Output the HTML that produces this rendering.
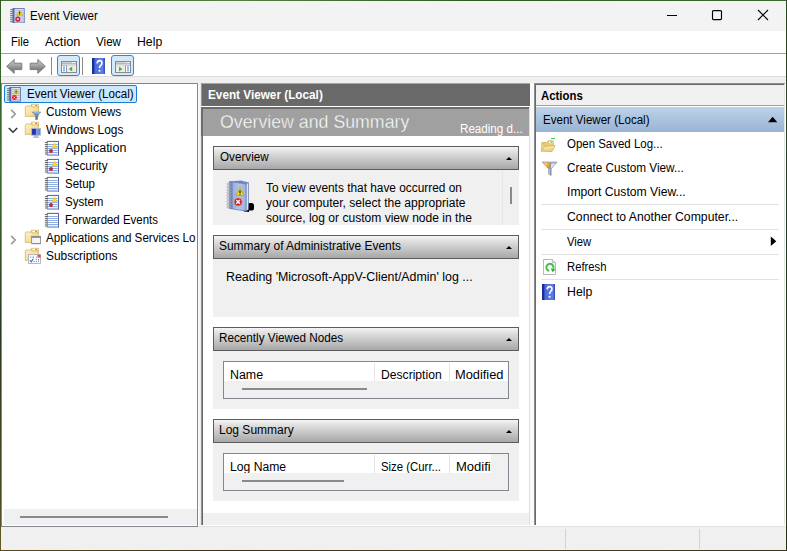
<!DOCTYPE html>
<html><head><meta charset="utf-8"><title>Event Viewer</title>
<style>
html,body{margin:0;padding:0}
body{width:787px;height:551px;overflow:hidden;position:relative;background:#2e4a22;font-family:"Liberation Sans",sans-serif;font-size:12px;color:#000}
.a{position:absolute}
.t{position:absolute;white-space:nowrap;line-height:14px;transform-origin:0 0}
#edgeT{left:0;top:0;width:787px;height:1px;background:linear-gradient(90deg,#3f6a2c,#55803a 30%,#2f5a24 60%,#3a6a2a)}
#edgeL{left:0;top:0;width:1px;height:551px;background:linear-gradient(180deg,#2f5a22,#3e7030 30%,#2a3a20 60%,#4a4a20 90%,#6a5a20)}
#edgeR{left:786px;top:0;width:1px;height:551px;background:linear-gradient(180deg,#2a4a20,#1f3a1a 50%,#2a3018)}
#edgeB{left:0;top:549px;width:787px;height:2px;background:linear-gradient(90deg,#5a4a1c,#3a3018 30%,#4a4020 60%,#3a3420)}
#win{left:1px;top:1px;width:785px;height:548px;background:#f0f0f0}
#title{left:1px;top:1px;width:785px;height:30px;background:#f3f3f3}
#menu{left:1px;top:31px;width:785px;height:22px;background:#fff}
#mline{left:1px;top:53px;width:785px;height:1px;background:#a0a0a0}
#tool{left:1px;top:54px;width:785px;height:22px;background:#fff}
#tline{left:1px;top:76px;width:785px;height:1px;background:#dcdcdc}
.tb{border:1px solid #2a8ade;background:#d4eafb;border-radius:3px;box-sizing:border-box}
.sep{width:1px;background:#8a8a8a}
/* tree pane */
#tree{left:1px;top:83px;width:197px;height:444px;box-sizing:border-box;border:1px solid #828790;background:#fff}
#treesb{left:3px;top:509px;width:193px;height:16px;background:#f0f0f0;border-left:1px solid #fff}
.thumb{height:2px;background:#8a8a8a}
#sel{left:4px;top:85px;width:133px;height:18px;box-sizing:border-box;border:1px solid #1a7fd4;background:#cce8ff;border-radius:2px}
/* middle pane */
#midgap{left:198px;top:83px;width:3px;height:444px;background:linear-gradient(90deg,#fbfbfb 0,#fbfbfb 33%,#f5f5f5 33%,#f5f5f5 66%,#ebebeb 66%)}
#mid{left:201px;top:83px;width:329px;height:443px;background:#fff}
#midbl{left:201px;top:83px;width:1px;height:443px;background:#969696}
#midbl2{left:202px;top:107px;width:1px;height:419px;background:#666}
#midbt{left:201px;top:83px;width:329px;height:1px;background:#a4a4a4}
#mhead{left:202px;top:84px;width:328px;height:21.5px;background:#696969}
#banner{left:201px;top:107px;width:328px;height:28.5px;background:#a0a0a0;box-sizing:border-box;border-top:2px solid #6c6c6c;border-left:2px solid #6c6c6c}
#midsb{left:203px;top:513px;width:326px;height:13px;background:#f0f0f0}
.sh{left:213px;width:306px;height:24px;box-sizing:border-box;border:1px solid #5c5c5c;background:linear-gradient(180deg,#f4f4f4 0%,#dedede 25%,#c6c6c6 58%,#a7a7a7 100%)}
.sc{left:213px;width:306px;background:#f0f0f0}
.tri{width:0;height:0;border-left:3px solid transparent;border-right:3px solid transparent;border-bottom:3.5px solid #000}
.lb{left:223px;width:286px;height:38px;box-sizing:border-box;border:1px solid #828790;background:#f0f0f0}
.lbw{left:224px;width:284px;height:19px;background:#fff;overflow:hidden}
.cs{width:1px;height:18px;background:#e5e5e5}
/* actions pane */
#gap2{left:530px;top:83px;width:4px;height:443px;background:#fafafa}
#act{left:534px;top:83px;width:252px;height:443px;background:#fff}
#actbl{left:534px;top:83px;width:1px;height:443px;background:#8e8e8e}
#actbl2{left:535px;top:84px;width:1px;height:442px;background:#696969}
#actbt{left:534px;top:83px;width:251px;height:1px;background:#8e8e8e}
#actbt2{left:535px;top:84px;width:250px;height:1px;background:#696969}
#actbr{left:784px;top:84px;width:1px;height:442px;background:#e3e3e3}
#actbr2{left:785px;top:83px;width:1px;height:443px;background:#fff}
#ahead{left:536px;top:85px;width:248px;height:20px;background:#f0f0f0}
#aline{left:536px;top:105px;width:248px;height:1px;background:#a0a0a0}
#aline2{left:536px;top:106px;width:248px;height:1px;background:#fff}
#ablue{left:536px;top:107px;width:248px;height:25px;background:linear-gradient(180deg,#bed2e9 0%,#afc6e1 40%,#98b3d4 100%)}
.asep{left:541px;width:238px;height:1px;background:#e2e2e2}
/* status */
#paneb{left:198px;top:525px;width:588px;height:1px;background:#fff}
#paneb2{left:198px;top:526px;width:588px;height:1px;background:#e2e2e2}
#status{left:1px;top:527px;width:785px;height:22.5px;background:#f0f0f0}
.sd{top:529px;width:1px;height:20px;background:#d2d2d2}
</style></head><body>
<div class="a" id="win"></div>
<div class="a" id="edgeT"></div><div class="a" id="edgeL"></div><div class="a" id="edgeR"></div><div class="a" id="edgeB"></div>
<div class="a" id="title"></div>
<div class="a" id="menu"></div><div class="a" id="mline"></div>
<div class="a" id="tool"></div><div class="a" id="tline"></div>
<!--ICONS_TOP-->
<!-- caption buttons -->
<svg class="a" style="left:660px;top:1px" width="126" height="30" viewBox="0 0 126 30">
<path d="M7 14.5h10" stroke="#000" stroke-width="1" fill="none"/>
<rect x="52.5" y="9.6" width="9" height="9" rx="1" stroke="#000" stroke-width="1.15" fill="none"/>
<path d="M98 9l10 10M108 9l-10 10" stroke="#000" stroke-width="1.1" fill="none"/>
</svg>
<!-- toolbar -->
<div class="a tb" style="left:57px;top:55px;width:23px;height:21px"></div>
<div class="a tb" style="left:111px;top:55px;width:23px;height:21px"></div>
<div class="a sep" style="left:51px;top:57px;height:18px"></div>
<div class="a sep" style="left:82px;top:57px;height:18px"></div>
<!-- tree -->
<div class="a" id="tree"></div>
<div class="a" id="treesb"></div><div class="a thumb" style="left:20px;top:516px;width:148px"></div>
<div class="a" id="sel"></div>
<!-- middle -->
<div class="a" id="midgap"></div>
<div class="a" id="mid"></div><div class="a" id="midbt"></div><div class="a" id="midbl"></div><div class="a" id="midbl2"></div>
<div class="a" id="mhead"></div><div class="a" style="left:201px;top:105.5px;width:329px;height:1.5px;background:#fff"></div>
<div class="a" id="banner"></div>
<div class="a" id="midsb"></div><div class="a" style="left:529px;top:107px;width:1px;height:419px;background:#dedede"></div>
<div class="a sh" style="top:146px"></div><div class="a sc" style="top:170px;height:55px"></div>
<div class="a sh" style="top:235px"></div><div class="a sc" style="top:259px;height:58px"></div>
<div class="a sh" style="top:327px"></div><div class="a sc" style="top:351px;height:58px"></div>
<div class="a sh" style="top:419px"></div><div class="a sc" style="top:443px;height:58px"></div>
<div class="a tri" style="left:506px;top:157px"></div>
<div class="a tri" style="left:506px;top:246px"></div>
<div class="a tri" style="left:506px;top:338px"></div>
<div class="a tri" style="left:506px;top:430px"></div>
<div class="a" style="left:502px;top:170px;width:1px;height:55px;background:#e6e6e6"></div>
<div class="a" style="left:510px;top:187px;width:2px;height:17px;background:#8a8a8a"></div>
<div class="a lb" style="top:361px"></div><div class="a lbw" style="top:362px"></div>
<div class="a cs" style="left:374px;top:363px"></div><div class="a cs" style="left:449px;top:363px"></div>
<div class="a thumb" style="left:242px;top:388px;width:125px"></div>
<div class="a lb" style="top:453px"></div><div class="a lbw" style="top:454px;width:267px"></div>
<div class="a cs" style="left:374px;top:455px"></div><div class="a cs" style="left:449px;top:455px"></div>
<div class="a thumb" style="left:242px;top:480px;width:102px"></div>
<!-- actions -->
<div class="a" id="gap2"></div>
<div class="a" id="act"></div>
<div class="a" id="actbl"></div><div class="a" id="actbt"></div><div class="a" id="actbl2"></div><div class="a" id="actbt2"></div><div class="a" id="actbr"></div><div class="a" id="actbr2"></div>
<div class="a" id="ahead"></div><div class="a" id="aline"></div><div class="a" id="aline2"></div>
<div class="a" id="ablue"></div>
<svg class="a" style="left:766px;top:114px" width="14" height="12" viewBox="0 0 14 12"><path d="M2 8.3h9.3l-4.65-5.5z" fill="#000"/></svg>
<div class="a asep" style="top:204px"></div>
<div class="a asep" style="top:229px"></div>
<div class="a asep" style="top:254px"></div>
<div class="a asep" style="top:279px"></div>
<svg class="a" style="left:768px;top:234px" width="12" height="14" viewBox="0 0 12 14"><path d="M2.8 2.6v9.5l5.5-4.75z" fill="#000"/></svg>
<!-- status -->
<div class="a" id="paneb"></div><div class="a" id="paneb2"></div>
<div class="a" id="status"></div>
<div class="a sd" style="left:565px"></div><div class="a sd" style="left:699px"></div>
<svg class="a" style="left:8.8px;top:6.5px" width="16.8" height="16.8" viewBox="0 0 16 16"><rect x="3.9" y="1.5" width="10.6" height="13.7" fill="#dfe6f6" stroke="#6474ae" stroke-width="0.9"/><rect x="3.6" y="1.1" width="1.7" height="14.5" fill="#5c6cab"/><path d="M5.6 3.5h8.4M5.6 5.5h8.4M5.6 7.5h8.4M5.6 9.5h8.4M5.6 11.5h8.4M5.6 13.5h8.4" stroke="#aab9de" stroke-width="1"/><path d="M1.1 2.6h3" stroke="#6b655c" stroke-width="0.9"/><path d="M1.1 4.5h3" stroke="#6b655c" stroke-width="0.9"/><path d="M1.1 6.4h3" stroke="#6b655c" stroke-width="0.9"/><path d="M1.1 8.3h3" stroke="#6b655c" stroke-width="0.9"/><path d="M1.1 10.2h3" stroke="#6b655c" stroke-width="0.9"/><path d="M1.1 12.1h3" stroke="#6b655c" stroke-width="0.9"/><path d="M1.1 14.0h3" stroke="#6b655c" stroke-width="0.9"/><path d="M10.1 3l2.9 5h-5.8z" fill="#f4d61e" stroke="#c9aa10" stroke-width="0.5"/><path d="M10.1 4.6v1.8M10.1 6.9v0.6" stroke="#1a1a1a" stroke-width="1"/><circle cx="8.4" cy="11.5" r="2.45" fill="#d8202a"/><path d="M7.5 10.6l1.8 1.8M9.3 10.6l-1.8 1.8" stroke="#fff" stroke-width="0.75"/></svg>
<svg class="a" style="left:5.5px;top:59px" width="17" height="15" viewBox="0 0 17 15"><defs><linearGradient id="ga" x1="0" y1="0" x2="0" y2="1"><stop offset="0" stop-color="#c8c8c8"/><stop offset="0.4" stop-color="#a8a8a8"/><stop offset="0.7" stop-color="#808080"/><stop offset="1" stop-color="#a8a8a8"/></linearGradient></defs><path d="M0.7 7.4l7.5-7v3.8h7.6v6.4h-7.6v3.8z" fill="url(#ga)" stroke="#747474" stroke-width="0.9" stroke-linejoin="round"/></svg>
<svg class="a" style="left:28.5px;top:59px" width="17" height="15" viewBox="0 0 17 15"><path d="M16.3 7.4l-7.5-7v3.8h-7.6v6.4h7.6v3.8z" fill="url(#ga)" stroke="#747474" stroke-width="0.9" stroke-linejoin="round"/></svg>
<svg class="a" style="left:61px;top:61px" width="16" height="12" viewBox="0 0 16 12"><rect x="0.5" y="0.5" width="15" height="11" fill="#fff" stroke="#8a8a8a"/><rect x="1" y="1" width="14" height="1.4" fill="#d2d2d2"/><path d="M1 2.7h14" stroke="#8e8e8e" stroke-width="0.7"/><path d="M1 4.1h14" stroke="#9c9c9c" stroke-width="0.8"/><rect x="11" y="1" width="1.2" height="1.1" fill="#fff"/><rect x="13" y="1" width="1.2" height="1.1" fill="#fff"/><rect x="6" y="4.5" width="9" height="6.5" fill="#ececec"/><path d="M5.5 4.5v7" stroke="#9a9a9a" stroke-width="1"/><path d="M2 5.9h2M2 7.8h2M2 9.7h2" stroke="#4a86e0" stroke-width="1"/><path d="M11.2 5.6v5l-3.4-2.5z" fill="#38b838"/></svg>
<svg class="a" style="left:115px;top:61px" width="16" height="12" viewBox="0 0 16 12"><rect x="0.5" y="0.5" width="15" height="11" fill="#fff" stroke="#8a8a8a"/><rect x="1" y="1" width="14" height="1.4" fill="#d2d2d2"/><path d="M1 2.7h14" stroke="#8e8e8e" stroke-width="0.7"/><path d="M1 4.1h14" stroke="#9c9c9c" stroke-width="0.8"/><rect x="11" y="1" width="1.2" height="1.1" fill="#fff"/><rect x="13" y="1" width="1.2" height="1.1" fill="#fff"/><rect x="1" y="4.5" width="9" height="6.5" fill="#ececec"/><path d="M10.5 4.5v7" stroke="#9a9a9a" stroke-width="1"/><path d="M12 5.9h2M12 7.8h2M12 9.7h2" stroke="#4a86e0" stroke-width="1"/><path d="M4 5.6v5l3.4-2.5z" fill="#38b838"/></svg>
<svg class="a" style="left:92px;top:58px" width="13" height="16" viewBox="0 0 13 16"><defs><linearGradient id="gh92" x1="0" y1="0" x2="1" y2="0"><stop offset="0" stop-color="#2238a8"/><stop offset="0.25" stop-color="#4a6ad8"/><stop offset="0.8" stop-color="#5f80e4"/><stop offset="1" stop-color="#3048b8"/></linearGradient></defs><rect x="0" y="0" width="13" height="16" fill="url(#gh92)"/><rect x="0" y="0" width="2.2" height="16" fill="#1c2f98"/><path d="M5.2 5.4c0-3.6 4.8-3.6 4.8-0.5c0 2.3-2.5 2.4-2.5 5" stroke="#fff" stroke-width="1.6" fill="none"/><circle cx="7.5" cy="12.7" r="1.05" fill="#fff"/></svg>
<svg class="a" style="left:6px;top:86px" width="16" height="16" viewBox="0 0 16 16"><rect x="3.9" y="1.5" width="10.6" height="13.7" fill="#dfe6f6" stroke="#6474ae" stroke-width="0.9"/><rect x="3.6" y="1.1" width="1.7" height="14.5" fill="#5c6cab"/><path d="M5.6 3.5h8.4M5.6 5.5h8.4M5.6 7.5h8.4M5.6 9.5h8.4M5.6 11.5h8.4M5.6 13.5h8.4" stroke="#aab9de" stroke-width="1"/><path d="M1.1 2.6h3" stroke="#6b655c" stroke-width="0.9"/><path d="M1.1 4.5h3" stroke="#6b655c" stroke-width="0.9"/><path d="M1.1 6.4h3" stroke="#6b655c" stroke-width="0.9"/><path d="M1.1 8.3h3" stroke="#6b655c" stroke-width="0.9"/><path d="M1.1 10.2h3" stroke="#6b655c" stroke-width="0.9"/><path d="M1.1 12.1h3" stroke="#6b655c" stroke-width="0.9"/><path d="M1.1 14.0h3" stroke="#6b655c" stroke-width="0.9"/><path d="M10.1 3l2.9 5h-5.8z" fill="#f4d61e" stroke="#c9aa10" stroke-width="0.5"/><path d="M10.1 4.6v1.8M10.1 6.9v0.6" stroke="#1a1a1a" stroke-width="1"/><circle cx="8.4" cy="11.5" r="2.45" fill="#d8202a"/><path d="M7.5 10.6l1.8 1.8M9.3 10.6l-1.8 1.8" stroke="#fff" stroke-width="0.75"/></svg>
<svg class="a" style="left:9.8px;top:108.5px" width="8" height="10" viewBox="0 0 8 10"><path d="M1.2 0.9l4 4.1l-4 4.1" stroke="#989898" stroke-width="1.6" fill="none"/></svg>
<svg class="a" style="left:24px;top:103px" width="18" height="18" viewBox="0 0 18 18"><defs><linearGradient id="gfa" x1="0" y1="0" x2="1" y2="1"><stop offset="0" stop-color="#fdf3cc"/><stop offset="1" stop-color="#efcf7c"/></linearGradient></defs><path d="M7.4 1.3h7v3h-7z" fill="#e9c766" stroke="#d2ae55" stroke-width="0.7"/><rect x="8.4" y="1.7" width="5.2" height="2" fill="#fff"/><rect x="11.2" y="1.9" width="1.8" height="0.9" fill="#3f86ea"/><path d="M1.3 4.2q0-1.2 1.2-1.2h4.6l1 0.9h6.3v9.5h-13.1z" fill="url(#gfa)" stroke="#d6b55c" stroke-width="0.8"/><path d="M8.2 9.1h8.6l-3.3 3.6v3.9h-2v-3.9z" fill="#6d8fb4" stroke="#587a9e" stroke-width="0.5"/><path d="M9.3 9.9h6.4" stroke="#c6d8ea" stroke-width="0.9"/><path d="M12.8 12.8v3.6" stroke="#4a6484" stroke-width="0.8"/></svg>
<svg class="a" style="left:8.1px;top:127.4px" width="10" height="7" viewBox="0 0 10 7"><path d="M0.8 1l4.2 4.2l4.2-4.2" stroke="#363636" stroke-width="1.6" fill="none"/></svg>
<svg class="a" style="left:24px;top:121px" width="18" height="18" viewBox="0 0 18 18"><defs><linearGradient id="gfb" x1="0" y1="0" x2="1" y2="1"><stop offset="0" stop-color="#fdf3cc"/><stop offset="1" stop-color="#efcf7c"/></linearGradient></defs><path d="M7.4 1.3h7v3h-7z" fill="#e9c766" stroke="#d2ae55" stroke-width="0.7"/><rect x="8.4" y="1.7" width="5.2" height="2" fill="#fff"/><rect x="11.2" y="1.9" width="1.8" height="0.9" fill="#3f86ea"/><path d="M1.3 4.2q0-1.2 1.2-1.2h4.6l1 0.9h6.3v9.5h-13.1z" fill="url(#gfb)" stroke="#d6b55c" stroke-width="0.8"/><defs><linearGradient id="gm" x1="0" y1="0" x2="1" y2="0"><stop offset="0" stop-color="#0c18b4"/><stop offset="0.45" stop-color="#2a3ed0"/><stop offset="0.55" stop-color="#7f9ae8"/><stop offset="1" stop-color="#5a7ee0"/></linearGradient></defs><rect x="7.7" y="7.4" width="8.8" height="6.8" fill="url(#gm)" stroke="#b4b8c0" stroke-width="0.9"/><path d="M10.3 15h3.6M9.2 16.2h5.8" stroke="#8a8a8a" stroke-width="0.8"/></svg>
<svg class="a" style="left:44px;top:140px" width="16" height="17" viewBox="0 0 16 17"><rect x="3.2" y="1.4" width="11.3" height="14" fill="#fff" stroke="#9aa0b4" stroke-width="0.8"/><path d="M3 1.4h11.9M14.5 1.2v14.4" stroke="#5666a8" stroke-width="1" fill="none"/><path d="M4 4.5h9.8M4 6.5h9.8M4 8.5h9.8M4 10.5h9.8M4 12.5h9.8M4 14.3h9.8" stroke="#86a4dc" stroke-width="0.9"/><path d="M0.9 2.6h3" stroke="#55524e" stroke-width="0.9"/><path d="M0.9 4.5h3" stroke="#55524e" stroke-width="0.9"/><path d="M0.9 6.4h3" stroke="#55524e" stroke-width="0.9"/><path d="M0.9 8.3h3" stroke="#55524e" stroke-width="0.9"/><path d="M0.9 10.2h3" stroke="#55524e" stroke-width="0.9"/><path d="M0.9 12.1h3" stroke="#55524e" stroke-width="0.9"/><path d="M0.9 14.0h3" stroke="#55524e" stroke-width="0.9"/><path d="M10.55 2.8l2.8 4.9h-5.6z" fill="#f7dc22" stroke="#e0c010" stroke-width="0.4"/><circle cx="7" cy="11" r="1.95" fill="#cc2228"/></svg>
<svg class="a" style="left:44px;top:158px" width="16" height="17" viewBox="0 0 16 17"><rect x="3.2" y="1.4" width="11.3" height="14" fill="#fff" stroke="#9aa0b4" stroke-width="0.8"/><path d="M3 1.4h11.9M14.5 1.2v14.4" stroke="#5666a8" stroke-width="1" fill="none"/><path d="M4 4.5h9.8M4 6.5h9.8M4 8.5h9.8M4 10.5h9.8M4 12.5h9.8M4 14.3h9.8" stroke="#86a4dc" stroke-width="0.9"/><path d="M0.9 2.6h3" stroke="#55524e" stroke-width="0.9"/><path d="M0.9 4.5h3" stroke="#55524e" stroke-width="0.9"/><path d="M0.9 6.4h3" stroke="#55524e" stroke-width="0.9"/><path d="M0.9 8.3h3" stroke="#55524e" stroke-width="0.9"/><path d="M0.9 10.2h3" stroke="#55524e" stroke-width="0.9"/><path d="M0.9 12.1h3" stroke="#55524e" stroke-width="0.9"/><path d="M0.9 14.0h3" stroke="#55524e" stroke-width="0.9"/><path d="M10.55 2.8l2.8 4.9h-5.6z" fill="#f7dc22" stroke="#e0c010" stroke-width="0.4"/><circle cx="7" cy="11" r="1.95" fill="#cc2228"/></svg>
<svg class="a" style="left:44px;top:176px" width="16" height="17" viewBox="0 0 16 17"><rect x="3.2" y="1.4" width="11.3" height="14" fill="#fff" stroke="#9aa0b4" stroke-width="0.8"/><path d="M3 1.4h11.9M14.5 1.2v14.4" stroke="#5666a8" stroke-width="1" fill="none"/><path d="M4 4.5h9.8M4 6.5h9.8M4 8.5h9.8M4 10.5h9.8M4 12.5h9.8M4 14.3h9.8" stroke="#86a4dc" stroke-width="0.9"/><path d="M0.9 2.6h3" stroke="#55524e" stroke-width="0.9"/><path d="M0.9 4.5h3" stroke="#55524e" stroke-width="0.9"/><path d="M0.9 6.4h3" stroke="#55524e" stroke-width="0.9"/><path d="M0.9 8.3h3" stroke="#55524e" stroke-width="0.9"/><path d="M0.9 10.2h3" stroke="#55524e" stroke-width="0.9"/><path d="M0.9 12.1h3" stroke="#55524e" stroke-width="0.9"/><path d="M0.9 14.0h3" stroke="#55524e" stroke-width="0.9"/></svg>
<svg class="a" style="left:44px;top:194px" width="16" height="17" viewBox="0 0 16 17"><rect x="3.2" y="1.4" width="11.3" height="14" fill="#fff" stroke="#9aa0b4" stroke-width="0.8"/><path d="M3 1.4h11.9M14.5 1.2v14.4" stroke="#5666a8" stroke-width="1" fill="none"/><path d="M4 4.5h9.8M4 6.5h9.8M4 8.5h9.8M4 10.5h9.8M4 12.5h9.8M4 14.3h9.8" stroke="#86a4dc" stroke-width="0.9"/><path d="M0.9 2.6h3" stroke="#55524e" stroke-width="0.9"/><path d="M0.9 4.5h3" stroke="#55524e" stroke-width="0.9"/><path d="M0.9 6.4h3" stroke="#55524e" stroke-width="0.9"/><path d="M0.9 8.3h3" stroke="#55524e" stroke-width="0.9"/><path d="M0.9 10.2h3" stroke="#55524e" stroke-width="0.9"/><path d="M0.9 12.1h3" stroke="#55524e" stroke-width="0.9"/><path d="M0.9 14.0h3" stroke="#55524e" stroke-width="0.9"/><path d="M10.55 2.8l2.8 4.9h-5.6z" fill="#f7dc22" stroke="#e0c010" stroke-width="0.4"/><circle cx="7" cy="11" r="1.95" fill="#cc2228"/></svg>
<svg class="a" style="left:44px;top:212px" width="16" height="17" viewBox="0 0 16 17"><rect x="3.2" y="1.4" width="11.3" height="14" fill="#fff" stroke="#9aa0b4" stroke-width="0.8"/><path d="M3 1.4h11.9M14.5 1.2v14.4" stroke="#5666a8" stroke-width="1" fill="none"/><path d="M4 4.5h9.8M4 6.5h9.8M4 8.5h9.8M4 10.5h9.8M4 12.5h9.8M4 14.3h9.8" stroke="#86a4dc" stroke-width="0.9"/><path d="M0.9 2.6h3" stroke="#55524e" stroke-width="0.9"/><path d="M0.9 4.5h3" stroke="#55524e" stroke-width="0.9"/><path d="M0.9 6.4h3" stroke="#55524e" stroke-width="0.9"/><path d="M0.9 8.3h3" stroke="#55524e" stroke-width="0.9"/><path d="M0.9 10.2h3" stroke="#55524e" stroke-width="0.9"/><path d="M0.9 12.1h3" stroke="#55524e" stroke-width="0.9"/><path d="M0.9 14.0h3" stroke="#55524e" stroke-width="0.9"/></svg>
<svg class="a" style="left:9.8px;top:234.5px" width="8" height="10" viewBox="0 0 8 10"><path d="M1.2 0.9l4 4.1l-4 4.1" stroke="#989898" stroke-width="1.6" fill="none"/></svg>
<svg class="a" style="left:24px;top:229px" width="18" height="18" viewBox="0 0 18 18"><defs><linearGradient id="gfc" x1="0" y1="0" x2="1" y2="1"><stop offset="0" stop-color="#fdf3cc"/><stop offset="1" stop-color="#efcf7c"/></linearGradient></defs><path d="M7.4 1.3h7v3h-7z" fill="#e9c766" stroke="#d2ae55" stroke-width="0.7"/><rect x="8.4" y="1.7" width="5.2" height="2" fill="#fff"/><rect x="11.2" y="1.9" width="1.8" height="0.9" fill="#3f86ea"/><path d="M1.3 4.2q0-1.2 1.2-1.2h4.6l1 0.9h6.3v9.5h-13.1z" fill="url(#gfc)" stroke="#d6b55c" stroke-width="0.8"/><rect x="7.6" y="7.4" width="8.9" height="7.2" fill="#f4f4f6" stroke="#8e8e92" stroke-width="0.9"/><rect x="7.6" y="7.2" width="8.9" height="1.6" fill="#84868c"/><path d="M8 14.7h8.6" stroke="#85878c" stroke-width="0.8"/></svg>
<svg class="a" style="left:24px;top:247px" width="18" height="18" viewBox="0 0 18 18"><defs><linearGradient id="gfd" x1="0" y1="0" x2="1" y2="1"><stop offset="0" stop-color="#fdf3cc"/><stop offset="1" stop-color="#efcf7c"/></linearGradient></defs><path d="M7.4 1.3h7v3h-7z" fill="#e9c766" stroke="#d2ae55" stroke-width="0.7"/><rect x="8.4" y="1.7" width="5.2" height="2" fill="#fff"/><rect x="11.2" y="1.9" width="1.8" height="0.9" fill="#3f86ea"/><path d="M1.3 4.2q0-1.2 1.2-1.2h4.6l1 0.9h6.3v9.5h-13.1z" fill="url(#gfd)" stroke="#d6b55c" stroke-width="0.8"/><rect x="4.4" y="7.7" width="12.1" height="8.7" fill="#fff" stroke="#a4a8b0" stroke-width="0.8"/><rect x="13.4" y="7.7" width="3.1" height="3" fill="#ee4850"/><path d="M13.4 9.2l1.6 1.5" stroke="#fbb" stroke-width="0.6"/><path d="M6.3 10.2h1M8.6 10.2h1.5M12 10.2h0.8M11.8 12.4h1M14 12.4h1M9.6 14.4h1M11.8 14.4h1M14 14.4h1" stroke="#4a6cc4" stroke-width="1"/><path d="M6 13.3l1.3 1.5l2-3" stroke="#2e62d8" stroke-width="1.1" fill="none"/></svg>
<svg class="a" style="left:226px;top:180px" width="29" height="33" viewBox="0 0 29 33"><defs><linearGradient id="gb" x1="0" y1="0" x2="1" y2="0"><stop offset="0" stop-color="#8ea6d2"/><stop offset="0.6" stop-color="#b4c6e4"/><stop offset="1" stop-color="#9cb2da"/></linearGradient></defs><rect x="21.2" y="22.9" width="6.8" height="7.7" rx="2.6" fill="#000"/><path d="M16.5 29.3l6.5-0.8v3.4l-5-0.4z" fill="#000"/><path d="M3.6 1.4l11.6-0.8l7.2 1.9l-2.4 1.6z" fill="#6f86c0"/><path d="M20 4l2.4-1.6v27.2l-2.4 1.5z" fill="#eef1f8" stroke="#5068a8" stroke-width="0.7"/><path d="M3.6 1.5l16.4 2.5v27.1l-16.4-2.6z" fill="url(#gb)" stroke="#5a72b0" stroke-width="0.7"/><path d="M3.6 1.5l3 0.45v27l-3-0.45z" fill="#6a82bc"/><path d="M7 5.6l12.6 1.6M7 8.6l12.6 1.4M7 11.6l12.6 1.2M7 14.6l12.6 1M7 17.6l12.6 0.8M7 20.6l12.6 0.6M7 23.6l12.6 0.4M7 26.6l12.6 0.3" stroke="#a4b8dc" stroke-width="0.7"/><ellipse cx="3" cy="4" rx="2.2" ry="0.9" fill="none" stroke="#a2a5ae" stroke-width="0.9"/><ellipse cx="3" cy="6.9" rx="2.2" ry="0.9" fill="none" stroke="#a2a5ae" stroke-width="0.9"/><ellipse cx="3" cy="9.8" rx="2.2" ry="0.9" fill="none" stroke="#a2a5ae" stroke-width="0.9"/><ellipse cx="3" cy="12.7" rx="2.2" ry="0.9" fill="none" stroke="#a2a5ae" stroke-width="0.9"/><ellipse cx="3" cy="15.6" rx="2.2" ry="0.9" fill="none" stroke="#a2a5ae" stroke-width="0.9"/><ellipse cx="3" cy="18.5" rx="2.2" ry="0.9" fill="none" stroke="#a2a5ae" stroke-width="0.9"/><ellipse cx="3" cy="21.4" rx="2.2" ry="0.9" fill="none" stroke="#a2a5ae" stroke-width="0.9"/><ellipse cx="3" cy="24.3" rx="2.2" ry="0.9" fill="none" stroke="#a2a5ae" stroke-width="0.9"/><ellipse cx="3" cy="27" rx="2.2" ry="0.9" fill="none" stroke="#a2a5ae" stroke-width="0.9"/><path d="M14 7.7l4.2 8h-8.4z" fill="#f6d820" stroke="#b89808" stroke-width="0.7" stroke-linejoin="round"/><path d="M14 10.4v2.8M14 13.9v0.9" stroke="#1a1a1a" stroke-width="1.3"/><circle cx="12.1" cy="21.9" r="4" fill="#cc1e28" stroke="#e8a0a4" stroke-width="0.5"/><path d="M10.3 20.1l3.6 3.6M13.9 20.1l-3.6 3.6" stroke="#fff" stroke-width="1.4"/></svg>
<svg class="a" style="left:540px;top:137px" width="17" height="16" viewBox="0 0 17 16"><defs><linearGradient id="gof" x1="0" y1="0" x2="0.3" y2="1"><stop offset="0" stop-color="#fcf0c0"/><stop offset="1" stop-color="#ecce7a"/></linearGradient></defs><path d="M11 1.5h4" stroke="#36d23a" stroke-width="1"/><path d="M2 5.6h4.8l1.3-1.8h5.2v6h-11.3z" fill="#e8cb72" stroke="#cfaa50" stroke-width="0.7"/><rect x="9" y="4.4" width="3.4" height="1.8" fill="#fff"/><rect x="10.2" y="4.6" width="1.8" height="0.9" fill="#4688ea"/><path d="M2 5.8l-0.8 8.4l3.4-4.8z" fill="#f0d88c" stroke="#cfaa50" stroke-width="0.5"/><path d="M4.6 9.3l10.4-0.8l-3 6l-10.8-0.3z" fill="url(#gof)" stroke="#d2b05a" stroke-width="0.8" stroke-linejoin="round"/></svg>
<svg class="a" style="left:541px;top:161px" width="17" height="16" viewBox="0 0 17 16"><defs><radialGradient id="gfo" cx="0.45" cy="0.4" r="0.6"><stop offset="0" stop-color="#ffd84a"/><stop offset="0.6" stop-color="#f8a422"/><stop offset="1" stop-color="#f08c18"/></radialGradient><clipPath id="cf"><path d="M1.2 1.2h14.8l-5.8 6.6v6.8l-2.6-1.4v-5.4z"/></clipPath></defs><path d="M1.2 1.2h14.8l-5.8 6.6v6.8l-2.6-1.4v-5.4z" fill="#8a98ae" stroke="#74839a" stroke-width="0.5"/><g clip-path="url(#cf)"><ellipse cx="5" cy="3.8" rx="4.2" ry="3.4" fill="url(#gfo)"/><path d="M10.2 2.6l4.6-0.4l-5 5.6z" fill="#dfe4ec"/><path d="M7.6 8h1.1v6.5h-1.1z" fill="#c8d0dc"/></g><path d="M1 1.2h15.2" stroke="#a8b0bc" stroke-width="0.8"/></svg>
<svg class="a" style="left:543px;top:259px" width="13" height="16" viewBox="0 0 13 16"><path d="M0.5 0.5h8.8l3.2 3.2v11.8h-12z" fill="#fdfdfd" stroke="#a6a6a6" stroke-width="0.8"/><path d="M9.3 0.5v3.2h3.2" fill="#e4e4e4" stroke="#a6a6a6" stroke-width="0.7"/><path d="M6.1 11.95A3.6 3.6 0 1 1 10.3 9.6" stroke="#3fc03f" stroke-width="2" fill="none"/><path d="M7.6 9.3l4.9 1l-2.9 2.9z" fill="#2fb22f"/></svg>
<svg class="a" style="left:542px;top:284px" width="13" height="16" viewBox="0 0 13 16"><defs><linearGradient id="gh542" x1="0" y1="0" x2="1" y2="0"><stop offset="0" stop-color="#2238a8"/><stop offset="0.25" stop-color="#4a6ad8"/><stop offset="0.8" stop-color="#5f80e4"/><stop offset="1" stop-color="#3048b8"/></linearGradient></defs><rect x="0" y="0" width="13" height="16" fill="url(#gh542)"/><rect x="0" y="0" width="2.2" height="16" fill="#1c2f98"/><path d="M5.2 5.4c0-3.6 4.8-3.6 4.8-0.5c0 2.3-2.5 2.4-2.5 5" stroke="#fff" stroke-width="1.6" fill="none"/><circle cx="7.5" cy="12.7" r="1.05" fill="#fff"/></svg>

<div class="t" style="left:30.15px;top:9px;font-size:12px;line-height:14px;transform:scaleX(0.9612);">Event Viewer</div>
<div class="t" style="left:10.87px;top:35px;font-size:12px;line-height:14px;transform:scaleX(0.9333);">File</div>
<div class="t" style="left:44.86px;top:35px;font-size:12px;line-height:14px;transform:scaleX(1.0603);">Action</div>
<div class="t" style="left:95.68px;top:35px;font-size:12px;line-height:14px;transform:scaleX(0.9699);">View</div>
<div class="t" style="left:136.59px;top:35px;font-size:12px;line-height:14px;transform:scaleX(1.0219);">Help</div>
<div class="t" style="left:26.64px;top:87px;font-size:12px;line-height:14px;transform:scaleX(0.9650);">Event Viewer (Local)</div>
<div class="t" style="left:45.65px;top:105px;font-size:12px;line-height:14px;transform:scaleX(0.9839);">Custom Views</div>
<div class="t" style="left:46.02px;top:123px;font-size:12px;line-height:14px;transform:scaleX(0.9911);">Windows Logs</div>
<div class="t" style="left:64.96px;top:141px;font-size:12px;line-height:14px;transform:scaleX(1.0451);">Application</div>
<div class="t" style="left:64.52px;top:159px;font-size:12px;line-height:14px;transform:scaleX(0.9808);">Security</div>
<div class="t" style="left:64.53px;top:177px;font-size:12px;line-height:14px;transform:scaleX(0.9567);">Setup</div>
<div class="t" style="left:64.53px;top:195px;font-size:12px;line-height:14px;transform:scaleX(0.9605);">System</div>
<div class="t" style="left:64.95px;top:213px;font-size:12px;line-height:14px;transform:scaleX(0.9544);">Forwarded Events</div>
<div class="t" style="left:45.99px;top:231px;font-size:12px;line-height:14px;transform:scaleX(0.9696);">Applications and Services Lo</div>
<div class="t" style="left:45.51px;top:249px;font-size:12px;line-height:14px;transform:scaleX(0.9919);">Subscriptions</div>
<div class="t" style="left:208.05px;top:88px;font-size:12px;line-height:14px;font-weight:700;color:#fff;transform:scaleX(0.9799);">Event Viewer (Local)</div>
<div class="t" style="left:219.98px;top:112px;font-size:18px;line-height:20px;color:#fff;transform:scaleX(0.9855);-webkit-text-stroke:0.38px #a0a0a0;">Overview and Summary</div>
<div class="t" style="left:459.64px;top:122px;font-size:12px;line-height:14px;color:#fff;transform:scaleX(0.9674);">Reading d...</div>
<div class="t" style="left:219.91px;top:150px;font-size:12px;line-height:14px;transform:scaleX(0.9739);">Overview</div>
<div class="t" style="left:266.18px;top:181px;font-size:12px;line-height:14px;transform:scaleX(0.9891);">To view events that have occurred on</div>
<div class="t" style="left:266.18px;top:196px;font-size:12px;line-height:14px;transform:scaleX(1.0069);">your computer, select the appropriate</div>
<div class="t" style="left:265.89px;top:211px;font-size:12px;line-height:14px;transform:scaleX(1.0052);">source, log or custom view node in the</div>
<div class="t" style="left:219.4px;top:239px;font-size:12px;line-height:14px;transform:scaleX(0.9964);">Summary of Administrative Events</div>
<div class="t" style="left:225.58px;top:270px;font-size:12px;line-height:14px;transform:scaleX(1.0332);">Reading 'Microsoft-AppV-Client/Admin' log ...</div>
<div class="t" style="left:219.34px;top:331px;font-size:12px;line-height:14px;transform:scaleX(0.9758);">Recently Viewed Nodes</div>
<div class="t" style="left:219.31px;top:423px;font-size:12px;line-height:14px;transform:scaleX(1.0008);">Log Summary</div>
<div class="a" style="left:224px;top:362px;width:284px;height:19px;overflow:hidden"><div class="t" style="left:6.48px;top:6px;font-size:12px;line-height:14px;transform:scaleX(1.0341);">Name</div></div>
<div class="a" style="left:224px;top:362px;width:284px;height:19px;overflow:hidden"><div class="t" style="left:156.7px;top:6px;font-size:12px;line-height:14px;transform:scaleX(1.0105);">Description</div></div>
<div class="a" style="left:224px;top:362px;width:284px;height:19px;overflow:hidden"><div class="t" style="left:231.45px;top:6px;font-size:12px;line-height:14px;transform:scaleX(1.0690);">Modified</div></div>
<div class="a" style="left:224px;top:454px;width:267px;height:19px;overflow:hidden"><div class="t" style="left:6.2px;top:6px;font-size:12px;line-height:14px;transform:scaleX(1.0126);">Log Name</div></div>
<div class="a" style="left:224px;top:454px;width:267px;height:19px;overflow:hidden"><div class="t" style="left:156.64px;top:6px;font-size:12px;line-height:14px;transform:scaleX(0.9475);">Size (Curr...</div></div>
<div class="a" style="left:224px;top:454px;width:267px;height:19px;overflow:hidden"><div class="t" style="left:231.84px;top:6px;font-size:12px;line-height:14px;transform:scaleX(1.0836);">Modifi</div></div>
<div class="t" style="left:540.83px;top:89px;font-size:12px;line-height:14px;font-weight:700;transform:scaleX(0.9477);">Actions</div>
<div class="t" style="left:542.65px;top:113px;font-size:12px;line-height:14px;transform:scaleX(0.9641);">Event Viewer (Local)</div>
<div class="t" style="left:567.02px;top:137px;font-size:12px;line-height:14px;transform:scaleX(0.9549);">Open Saved Log...</div>
<div class="t" style="left:566.95px;top:161px;font-size:12px;line-height:14px;transform:scaleX(0.9796);">Create Custom View...</div>
<div class="t" style="left:566.83px;top:185px;font-size:12px;line-height:14px;transform:scaleX(1.0130);">Import Custom View...</div>
<div class="t" style="left:567.13px;top:210px;font-size:12px;line-height:14px;transform:scaleX(1.0186);">Connect to Another Computer...</div>
<div class="t" style="left:567.19px;top:235px;font-size:12px;line-height:14px;transform:scaleX(0.9388);">View</div>
<div class="t" style="left:566.87px;top:260px;font-size:12px;line-height:14px;transform:scaleX(0.9384);">Refresh</div>
<div class="t" style="left:566.79px;top:285px;font-size:12px;line-height:14px;transform:scaleX(1.0262);">Help</div>

</body></html>
